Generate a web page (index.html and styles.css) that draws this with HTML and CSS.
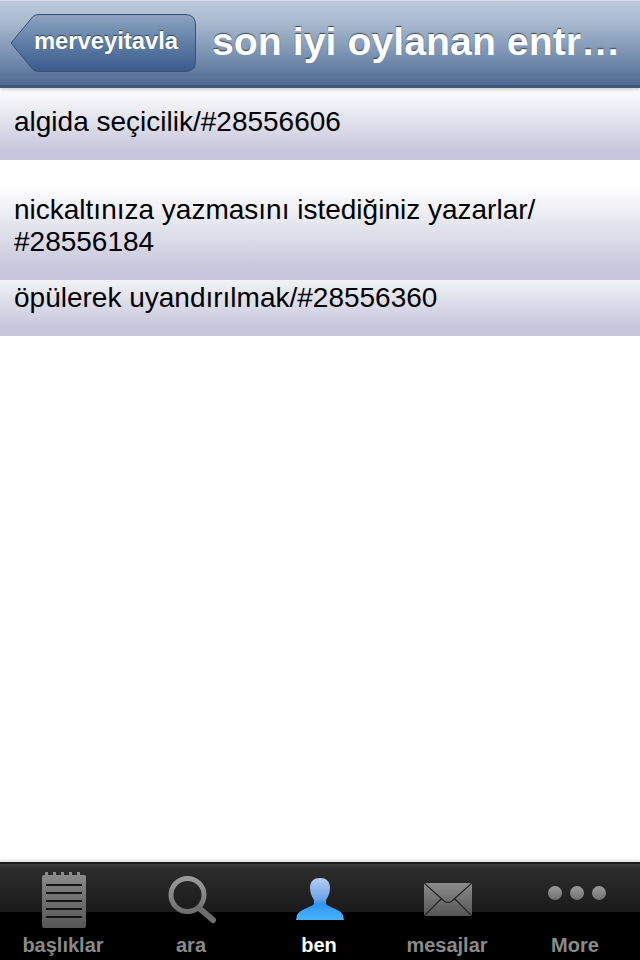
FILE: index.html
```html
<!doctype html>
<html lang="tr">
  <head>
    <meta charset="UTF-8" />
    <meta name="viewport" content="width=device-width, initial-scale=1.0" />
    <title>son iyi oylanan entry</title>
    <link rel="stylesheet" href="styles.css">
  </head>
  <body>
    <!-- Nav bar -->
    <header class="nav-bar">
      <button class="back-button">
        <svg class="back-shape" width="186" height="58" viewBox="0 0 186 58">
          <defs>
            <linearGradient id="backFill" x1="0" y1="0" x2="0" y2="1">
              <stop offset="0" stop-color="#8fa4c0" />
              <stop offset="0.5" stop-color="#5f7ea6" />
              <stop offset="1" stop-color="#3a5a8c" />
            </linearGradient>
          </defs>
          <path d="M1 29 L23 2.500 Q25 .5 29 .5 L175 .5 Q185.500 .5 185.500 11 L185.500 47 Q185.500 57.500 175 57.500 L29 57.500 Q25 57.500 23 55.500 Z" fill="url(#backFill)" stroke="#37506f" stroke-width="1" />
        </svg>
        <span class="back-label">merveyitavla</span>
      </button>
      <h1 class="nav-title">son iyi oylanan entr…</h1>
    </header>

    <!-- Entries -->
    <main class="entry-list">
      <div class="entry entry-first">algida seçicilik/#28556606</div>
      <div class="entry entry-second">nickaltınıza yazmasını istediğiniz yazarlar/<br />#28556184</div>
      <div class="entry entry-third">öpülerek uyandırılmak/#28556360</div>
    </main>

    <!-- Tab bar -->
    <nav class="tab-bar">
      <div class="tab">
        <svg class="tab-icon" width="48" height="58" viewBox="0 0 48 58">
          <defs>
            <linearGradient id="grey" x1="0" y1="0" x2="0" y2="1">
              <stop offset="0" stop-color="#8c8c8c" />
              <stop offset="1" stop-color="#555" />
            </linearGradient>
            <linearGradient id="greyLight" x1="0" y1="0" x2="0" y2="1">
              <stop offset="0" stop-color="#9a9a9a" />
              <stop offset="1" stop-color="#707070" />
            </linearGradient>
          </defs>
          <path d="M3 4 h2 v-3 h3 v3 h5 v-3 h3 v3 h5 v-3 h3 v3 h5 v-3 h3 v3 h5 v-3 h3 v3 h5 q1 0 1 2 v49 q0 2 -2 2 h-40 q-2 0 -2 -2 v-49 q0 -2 2 -2 z" fill="url(#grey)" />
          <g fill="#151515">
            <rect x="6" y="13" width="36" height="2" />
            <rect x="6" y="21" width="36" height="2" />
            <rect x="6" y="29" width="36" height="2" />
            <rect x="6" y="37" width="36" height="2" />
            <rect x="6" y="45" width="36" height="2" />
          </g>
        </svg>
        <span class="tab-label">başlıklar</span>
      </div>
      <div class="tab">
        <svg class="tab-icon" width="48" height="58" viewBox="0 0 48 58">
          <circle cx="19.500" cy="24" r="16.500" fill="none" stroke="url(#greyLight)" stroke-width="5" />
          <path d="M31 37 L45 49" fill="none" stroke="#6e6e6e" stroke-width="6" stroke-linecap="round" />
        </svg>
        <span class="tab-label">ara</span>
      </div>
      <div class="tab tab-active">
        <svg class="tab-icon" width="48" height="58" viewBox="0 0 48 58">
          <defs>
            <linearGradient id="blue" x1="0" y1="0" x2="0" y2="1">
              <stop offset="0" stop-color="#b4cdf0" />
              <stop offset="0.5" stop-color="#6ea4ea" />
              <stop offset="0.62" stop-color="#2f95f2" />
              <stop offset="1" stop-color="#48b4fb" />
            </linearGradient>
          </defs>
          <path d="M24 7 C18 7 14 10 14 17 C14 22 16 26 18 29 L18 33 C14 37 4 38 1 44 L0 49 L48 49 L47 44 C44 38 34 37 30 33 L30 29 C32 26 34 22 34 17 C34 10 30 7 24 7 Z" fill="url(#blue)" />
        </svg>
        <span class="tab-label">ben</span>
      </div>
      <div class="tab">
        <svg class="tab-icon" width="48" height="58" viewBox="0 0 48 58">
          <rect x="0" y="12" width="48" height="33" fill="url(#grey)" />
          <path d="M0 12 L20 30 Q24 33 28 30 L48 12 M0 45 L18 27 M48 45 L30 27" fill="none" stroke="#222" stroke-width="1.200" />
        </svg>
        <span class="tab-label">mesajlar</span>
      </div>
      <div class="tab">
        <svg class="tab-icon" width="60" height="58" viewBox="0 0 60 58">
          <circle cx="9" cy="22" r="7" fill="url(#greyLight)" />
          <circle cx="31" cy="22" r="7" fill="url(#greyLight)" />
          <circle cx="53" cy="22" r="7" fill="url(#greyLight)" />
        </svg>
        <span class="tab-label">More</span>
      </div>
    </nav>
  </body>
</html>
```

FILE: styles.css
```css
/* General */
body {
  width: 640px;
  height: 960px;
  margin: 0;
  display: flex;
  flex-direction: column;
  overflow: hidden;
  background-color: #fff;
  font-family: "Liberation Sans", Arial, sans-serif;
}

/* Nav bar */
.nav-bar {
  position: relative;
  z-index: 1;
  flex: none;
  height: 84px;
  display: flex;
  align-items: center;
  gap: 16px;
  padding-left: 10px;
  background: linear-gradient(#bccadb, #a9bad0 25%, #7f96b5 60%, #4f6a92);
  border-top: 1px solid #d5dee8;
  border-bottom: 3px solid #3f5675;
  box-shadow: 0 2px 3px rgba(0, 0, 0, 0.18);
}

.back-button {
  position: relative;
  flex: none;
  width: 186px;
  height: 58px;
  padding: 0 18px 4px 24px;
  border: none;
  background: none;
  display: flex;
  align-items: center;
  justify-content: center;
}

.back-shape {
  position: absolute;
  top: 0;
  left: 0;
}

.back-label {
  position: relative;
  color: #fff;
  font-family: inherit;
  font-size: 23.800px;
  font-weight: bold;
  text-shadow: 0 -1px 1px rgba(0, 0, 0, 0.5);
}

.nav-title {
  margin: 0 0 4px;
  color: #fff;
  font-size: 39.300px;
  font-weight: bold;
  white-space: nowrap;
  text-shadow: 0 -1px 1px rgba(0, 0, 0, 0.6);
}

/* Entries */
.entry-list {
  flex: 1;
}

.entry {
  box-sizing: border-box;
  padding: 0 14px;
  color: #000;
  font-size: 28px;
  line-height: 32px;
}

.entry-first {
  height: 72px;
  padding-top: 18px;
  background: linear-gradient(#fff, #c6c6dc 88%);
}

.entry-second {
  height: 120px;
  padding-top: 34px;
  background: linear-gradient(#fff 22%, #c6c6dc 92%);
}

.entry-third {
  height: 56px;
  padding-top: 2px;
  background: linear-gradient(#f2f2f7, #c6c6dc 85%);
}

/* Tab bar */
.tab-bar {
  flex: none;
  height: 96px;
  display: flex;
  background: linear-gradient(#3c3c3c, #2c2c2c 6%, #1a1a1a 50%, #000 50%);
  border-top: 2px solid #1c1c1c;
  box-shadow: 0 -2px 2px rgba(0, 0, 0, 0.12);
}

.tab {
  flex: 1;
  display: flex;
  flex-direction: column;
  align-items: center;
  padding-top: 7px;
}

.tab-icon {
  flex: none;
}

.tab-label {
  margin: 5px 2px 0 0;
  color: #8a8a8a;
  font-size: 20px;
  font-weight: bold;
  line-height: 22px;
}

.tab-active .tab-label {
  color: #fff;
}
```
